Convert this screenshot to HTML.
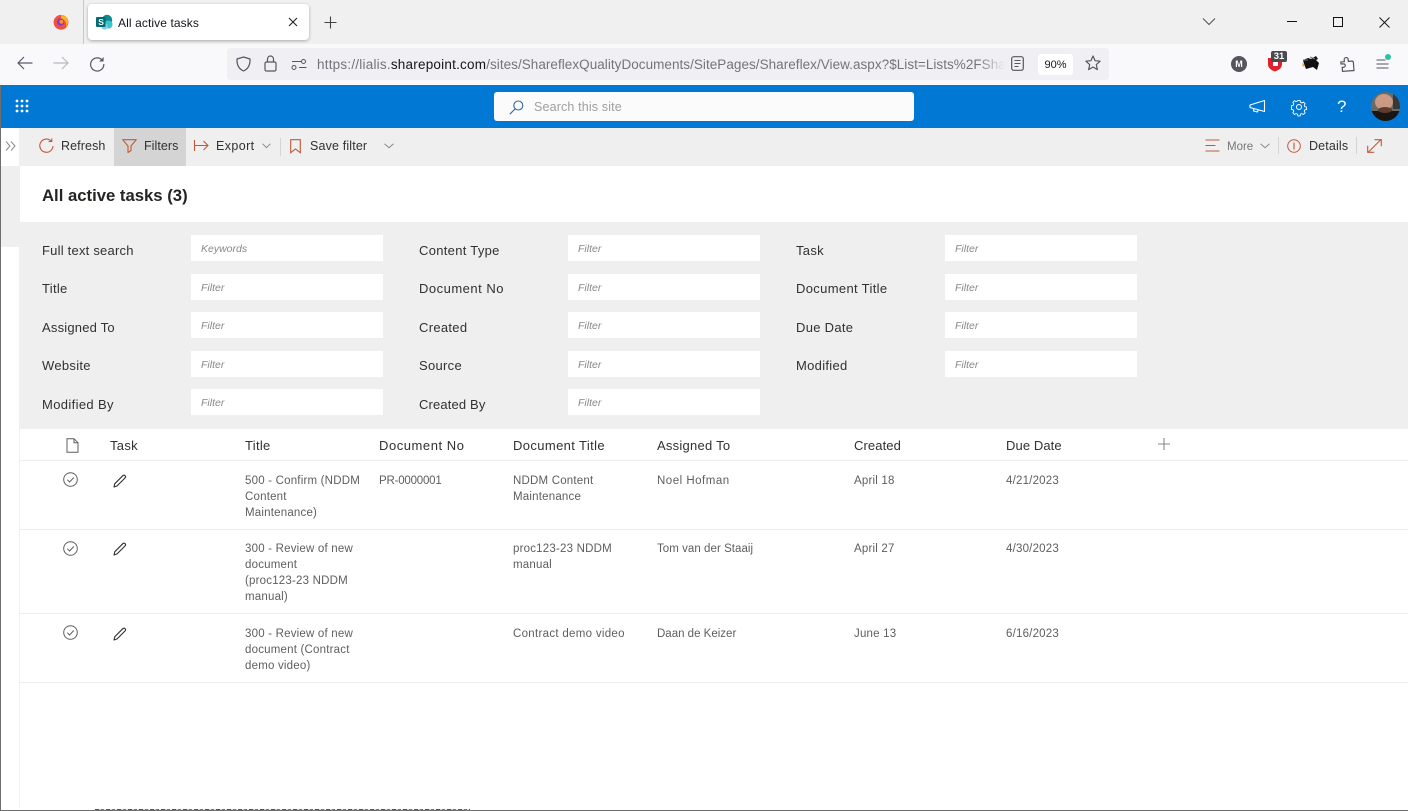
<!DOCTYPE html>
<html><head><meta charset="utf-8"><title>All active tasks</title>
<style>
html,body{margin:0;padding:0;background:#fff}
body{width:1408px;height:811px;position:relative;overflow:hidden;font-family:"Liberation Sans",sans-serif;color:#323130}
.a{position:absolute}
.t{position:absolute;white-space:nowrap;line-height:16px}
.lb{font-size:13px;color:#323130;letter-spacing:.3px}
.in{position:absolute;width:192px;height:26px;background:#fff;font-size:10.5px;font-style:italic;color:#8a8886;line-height:29px;text-indent:10px}
.h{font-size:13px;color:#323130;letter-spacing:.3px}
.c{font-size:11.5px;color:#605e5c;line-height:16px;letter-spacing:.2px}
.line{position:absolute;left:20px;width:1388px;height:1px;background:#ececec}
svg{position:absolute;overflow:visible}
</style></head><body>

<!-- browser chrome -->
<div class="a" style="left:0;top:0;width:1408px;height:44px;background:#f0f0f0"></div>
<div class="a" style="left:83px;top:0;width:1px;height:44px;background:#c8c8c8"></div>
<div class="a" style="left:88px;top:4px;width:221px;height:36px;background:#fff;border-radius:4px;box-shadow:0 1px 3px rgba(0,0,0,.3)"></div>
<svg style="left:53px;top:14px" width="16" height="16" viewBox="0 0 16 16"><circle cx="8" cy="8.3" r="7.4" fill="#f0503f"/><path d="M8 1a7 7 0 0 1 7 7c0 2-1 4-2 5 1-4-1-8-5-8z" fill="#ffb01f"/><circle cx="7.6" cy="8" r="3.6" fill="#7b3bd0"/><circle cx="8.4" cy="7.8" r="2" fill="#ff8a3c"/></svg>
<svg style="left:96px;top:14px" width="17" height="16" viewBox="0 0 17 16"><circle cx="11" cy="6" r="5.2" fill="#0f8b8d"/><circle cx="12.5" cy="10.5" r="4" fill="#37c6d0"/><circle cx="8.5" cy="12.5" r="3.2" fill="#7fd5da"/><rect x="0" y="3" width="9.5" height="10" rx="1" fill="#036c70"/><text x="2.2" y="11" font-size="8.5" font-weight="bold" fill="#fff" font-family="Liberation Sans">S</text></svg>
<div class="t" style="left:118px;top:15px;font-size:12px;color:#15141a;letter-spacing:.1px">All active tasks</div>
<svg style="left:288px;top:17px" width="10" height="10" viewBox="0 0 10 10"><path d="M1 1l8 8M9 1l-8 8" stroke="#222" stroke-width="1.1" fill="none"/></svg>
<svg style="left:324px;top:16px" width="13" height="13" viewBox="0 0 13 13"><path d="M6.5 .5v12M.5 6.5h12" stroke="#444" stroke-width="1.1" fill="none"/></svg>
<svg style="left:1202px;top:17px" width="14" height="9" viewBox="0 0 14 9"><path d="M1 1.5l6 6 6-6" stroke="#555" stroke-width="1.1" fill="none"/></svg>
<div class="a" style="left:1287px;top:21px;width:10px;height:1px;background:#111"></div>
<div class="a" style="left:1333px;top:17px;width:8px;height:8px;border:1px solid #111"></div>
<svg style="left:1379px;top:17px" width="11" height="11" viewBox="0 0 11 11"><path d="M.5.5l10 10M10.5.5l-10 10" stroke="#111" stroke-width=".9" fill="none"/></svg>

<!-- nav bar -->
<div class="a" style="left:0;top:44px;width:1408px;height:41px;background:#f9f9fb"></div>
<div class="a" style="left:227px;top:48px;width:882px;height:32px;background:#f0f0f4;border-radius:4px"></div>
<svg style="left:17px;top:56px" width="16" height="14" viewBox="0 0 16 14"><path d="M7 1L1 7l6 6M1 7h14.5" stroke="#5b5b66" stroke-width="1.2" fill="none"/></svg>
<svg style="left:53px;top:56px" width="16" height="14" viewBox="0 0 16 14"><path d="M9 1l6 6-6 6M15 7H.5" stroke="#b9b9bf" stroke-width="1.2" fill="none"/></svg>
<svg style="left:89px;top:56px" width="16" height="16" viewBox="0 0 16 16"><path d="M13.5 4.5A6.6 6.6 0 1 0 14.8 8" stroke="#5b5b66" stroke-width="1.2" fill="none"/><path d="M14.6 1v4.5h-4.500z" fill="#5b5b66"/></svg>
<svg style="left:236px;top:56px" width="15" height="16" viewBox="0 0 15 16"><path d="M7.5 1L14 3c.3 6-2 10-6.5 12C3 13 .7 9 1 3z" stroke="#55555f" stroke-width="1.2" fill="none"/></svg>
<svg style="left:264px;top:55px" width="13" height="17" viewBox="0 0 13 17"><rect x="1" y="7" width="11" height="9" rx="1.5" stroke="#55555f" stroke-width="1.2" fill="none"/><path d="M3.5 7V4a3 3 0 0 1 6 0v3" stroke="#55555f" stroke-width="1.2" fill="none"/></svg>
<svg style="left:291px;top:59px" width="16" height="11" viewBox="0 0 16 11"><path d="M1 2.500h9M8 8.500h7.500" stroke="#55555f" stroke-width="1.100" fill="none"/><circle cx="12.500" cy="2.500" r="2" stroke="#55555f" fill="none"/><circle cx="3" cy="8.500" r="2" stroke="#55555f" fill="none"/></svg>
<div class="t" style="left:317px;top:57px;width:688px;overflow:hidden;font-size:13.5px;color:#73737c;letter-spacing:.22px;-webkit-mask-image:linear-gradient(90deg,#000 96%,transparent);mask-image:linear-gradient(90deg,#000 96%,transparent)">https://lialis.<span style="color:#15141a">sharepoint.com</span><span style="letter-spacing:.04px">/sites/ShareflexQualityDocuments/SitePages/Shareflex/View.aspx?$List=Lists%2FShareflex</span></div>
<svg style="left:1011px;top:56px" width="13" height="15" viewBox="0 0 13 15"><rect x=".7" y=".7" width="11.600" height="13.600" rx="2" stroke="#55555f" stroke-width="1.200" fill="none"/><path d="M3.500 4.500h6M3.500 7.500h6M3.500 10.500h4" stroke="#55555f" fill="none"/></svg>
<div class="a" style="left:1038px;top:54px;width:35px;height:21px;background:#fff;border-radius:3px;font-size:11px;line-height:22px;text-align:center;color:#15141a">90%</div>
<svg style="left:1085px;top:55px" width="16" height="16" viewBox="0 0 16 16"><path d="M8 1l2.100 4.700 5 .5-3.800 3.400 1.100 5L8 12l-4.400 2.600 1.100-5L.9 6.200l5-.5z" stroke="#55555f" stroke-width="1.200" fill="none" stroke-linejoin="round"/></svg>
<div class="a" style="left:1231px;top:56px;width:16px;height:16px;border-radius:50%;background:#55555f;color:#fff;font-size:9px;font-weight:bold;line-height:16px;text-align:center">M</div>
<svg style="left:1268px;top:56px" width="16" height="16" viewBox="0 0 16 16"><path d="M0 2h14v6c0 4-3 6-7 7.500C3 14 0 12 0 8z" fill="#e0202a"/><rect x="5" y="6" width="5" height="4" fill="#fff"/></svg>
<div class="a" style="left:1271px;top:51px;width:16px;height:11px;background:#4a4a4f;border-radius:2px;color:#fff;font-size:9.500px;font-weight:bold;line-height:11px;text-align:center">31</div>
<svg style="left:1302px;top:55px" width="18" height="17" viewBox="0 0 18 17"><path d="M1 5l5-2 3 1 5-3 2 3-2 1 3 3-2 7-4-3-7 2-2-5z" fill="#111"/><path d="M1 5h5M8 2l5 2" stroke="#777" fill="none"/><path d="M0 8l3 2-2 2z" fill="#e8a33a"/></svg>
<svg style="left:1340px;top:56px" width="15" height="16" viewBox="0 0 15 16"><path d="M1 5.500h3.500V3.500a2 2 0 0 1 4 0v2H12c1 0 1.500.5 1.500 1.500v8H2V11h1.500a1.700 1.700 0 0 0 0-3.400H1z" stroke="#55555f" stroke-width="1.200" fill="none" transform="rotate(-4 7 8)"/></svg>
<svg style="left:1376px;top:58px" width="13" height="12" viewBox="0 0 13 12"><path d="M.5 2h9M.5 6h12M.5 10h12" stroke="#55555f" stroke-width="1.100" fill="none"/></svg>
<div class="a" style="left:1385px;top:54px;width:6px;height:6px;border-radius:50%;background:#2ac3a2"></div>

<!-- suite bar -->
<div class="a" style="left:0;top:85px;width:1408px;height:43px;background:#0078d4"></div>
<svg style="left:15px;top:99px" width="15" height="14" viewBox="0 0 15 14"><g fill="#fff"><circle cx="2" cy="2" r="1.400"/><circle cx="7" cy="2" r="1.400"/><circle cx="12" cy="2" r="1.400"/><circle cx="2" cy="7" r="1.400"/><circle cx="7" cy="7" r="1.400"/><circle cx="12" cy="7" r="1.400"/><circle cx="2" cy="12" r="1.400"/><circle cx="7" cy="12" r="1.400"/><circle cx="12" cy="12" r="1.400"/></g></svg>
<div class="a" style="left:494px;top:92px;width:420px;height:29px;background:#fbfbfb;border-radius:3px"></div>
<svg style="left:509px;top:100px" width="15" height="15" viewBox="0 0 15 15"><circle cx="9.300" cy="5.500" r="4.500" stroke="#2b6ca3" stroke-width="1.100" fill="none"/><path d="M6 9L.8 14.200" stroke="#2b6ca3" stroke-width="1.100"/></svg>
<div class="t" style="left:534px;top:99px;font-size:12.500px;color:#a19f9d;letter-spacing:.15px">Search this site</div>
<svg style="left:1249px;top:99px" width="17" height="15" viewBox="0 0 17 15"><path d="M15.500 1.500v11L1 8.500V6zM5 9.500l-.5 2.500 4 1 .8-2.400" stroke="#fff" stroke-width="1.100" fill="none" stroke-linejoin="round"/></svg>
<svg style="left:1291px;top:99px" width="16" height="16" viewBox="0 0 16 16"><circle cx="8" cy="8" r="2.500" stroke="#fff" fill="none"/><path d="M6.700.8h2.600l.4 2 1.500.7 1.800-1 1.800 1.900-1 1.700.6 1.500 2 .5v2.600l-2 .5-.6 1.500 1 1.700-1.800 1.900-1.800-1-1.500.6-.4 2H6.700l-.4-2-1.500-.6-1.800 1-1.800-1.900 1-1.700-.6-1.500-2-.5V6.600l2-.5.6-1.500-1-1.700 1.800-1.900 1.800 1 1.500-.7z" stroke="#fff" stroke-width="1" fill="none" transform="translate(.8 .8) scale(.9)"/></svg>
<div class="t" style="left:1337px;top:98px;font-size:17px;line-height:18px;color:#fff">?</div>
<svg style="left:1371px;top:92px" width="29" height="29" viewBox="0 0 29 29"><defs><clipPath id="av"><circle cx="14.500" cy="14.500" r="14.500"/></clipPath></defs><g clip-path="url(#av)"><rect width="29" height="29" fill="#6d6a66"/><ellipse cx="13" cy="10" rx="9" ry="8" fill="#c99b84"/><rect y="19" width="29" height="10" fill="#191512"/><ellipse cx="14" cy="18" rx="7" ry="3" fill="#5e3c2e"/><rect x="22" width="7" height="17" fill="#3a3836"/></g></svg>

<!-- left strip -->
<div class="a" style="left:0;top:85px;width:1px;height:726px;background:#6e6e6e"></div>
<div class="a" style="left:1px;top:128px;width:19px;height:119px;background:#efefef"></div>
<div class="a" style="left:1px;top:128px;width:18px;height:38px;background:#fff"></div>
<svg style="left:5px;top:141px" width="11" height="10" viewBox="0 0 11 10"><path d="M1 .5L5 5 1 9.500M6 .5L10 5 6 9.500" stroke="#8a8886" stroke-width="1" fill="none"/></svg>
<div class="a" style="left:19px;top:247px;width:1px;height:561px;background:#efefef"></div>
<div class="a" style="left:95px;top:809px;width:375px;height:1px;background:repeating-linear-gradient(90deg,#555 0 4px,#ccc 4px 6px,#777 6px 9px,#e4e4e4 9px 11px)"></div>
<div class="a" style="left:0;top:810px;width:1408px;height:1px;background:#6e6e6e"></div>

<!-- command bar -->
<div class="a" style="left:20px;top:128px;width:1388px;height:38px;background:#efefef"></div>
<div class="a" style="left:114px;top:128px;width:72px;height:38px;background:#d4d4d4"></div>
<svg style="left:39px;top:138px" width="15" height="15" viewBox="0 0 15 15"><path d="M12.500 3.500A6.600 6.600 0 1 0 14 8" stroke="#c0593a" stroke-width="1.100" fill="none"/><path d="M9.500 3.500h3.300V.5" stroke="#c0593a" stroke-width="1.100" fill="none"/></svg>
<div class="t" style="left:61px;top:138px;font-size:12.500px;color:#323130;letter-spacing:.1px">Refresh</div>
<svg style="left:122px;top:139px" width="15" height="14" viewBox="0 0 15 14"><path d="M.7.700h13.600L9 7v4.500l-3 2V7z" stroke="#c0593a" stroke-width="1.100" fill="none" stroke-linejoin="round"/></svg>
<div class="t" style="left:144px;top:138px;font-size:12.500px;color:#323130;letter-spacing:.05px">Filters</div>
<svg style="left:194px;top:140px" width="15" height="11" viewBox="0 0 15 11"><path d="M.5 0v11M1 5.500h13M9.500 1l4.500 4.500-4.500 4.500" stroke="#c0593a" stroke-width="1.100" fill="none"/></svg>
<div class="t" style="left:216px;top:138px;font-size:12.500px;color:#323130;letter-spacing:.4px">Export</div>
<svg style="left:262px;top:143px" width="9" height="6" viewBox="0 0 9 6"><path d="M.5.700L4.500 4.700 8.500.700" stroke="#8a8886" fill="none"/></svg>
<div class="a" style="left:280px;top:138px;width:1px;height:18px;background:#d4d4d4"></div>
<svg style="left:290px;top:139px" width="11" height="15" viewBox="0 0 11 15"><path d="M.7.700h9.600v13L5.500 10 .7 13.700z" stroke="#c0593a" stroke-width="1.100" fill="none"/></svg>
<div class="t" style="left:310px;top:138px;font-size:12.500px;color:#323130;letter-spacing:.15px">Save filter</div>
<svg style="left:384px;top:143px" width="10" height="6" viewBox="0 0 10 6"><path d="M.5.700L5 4.700 9.500.700" stroke="#8a8886" fill="none"/></svg>
<svg style="left:1205px;top:139px" width="15" height="13" viewBox="0 0 15 13"><path d="M.500 1h14M.500 6.500h10M.500 12h14" stroke="#c0593a" stroke-width="1.100" fill="none"/></svg>
<div class="t" style="left:1227px;top:139px;font-size:11.500px;color:#797775">More</div>
<svg style="left:1260px;top:143px" width="10" height="6" viewBox="0 0 10 6"><path d="M.5.700L5 4.700 9.500.700" stroke="#8a8886" fill="none"/></svg>
<div class="a" style="left:1278px;top:137px;width:1px;height:17px;background:#d4d4d4"></div>
<svg style="left:1287px;top:139px" width="14" height="14" viewBox="0 0 14 14"><circle cx="7" cy="7" r="6.300" stroke="#c0593a" stroke-width="1" fill="none"/><path d="M7 3.500v7" stroke="#c0593a" stroke-width="1.100"/></svg>
<div class="t" style="left:1309px;top:138px;font-size:12.500px;color:#323130;letter-spacing:.15px">Details</div>
<div class="a" style="left:1356px;top:137px;width:1px;height:17px;background:#d4d4d4"></div>
<svg style="left:1367px;top:139px" width="15" height="14" viewBox="0 0 15 14"><path d="M1 13.500L14 .5M7.500 .7h6.800v6.500M.7 6.800v6.500h6.500" stroke="#c0593a" stroke-width="1.100" fill="none"/></svg>

<!-- title -->
<div class="t" style="left:42px;top:187px;font-size:16.700px;line-height:18px;font-weight:bold;color:#252423">All active tasks (3)</div>

<!-- filters -->
<div class="a" style="left:20px;top:222px;width:1388px;height:207px;background:#efefef"></div>

<div class="t lb" style="left:42px;top:243px;letter-spacing:.22px">Full text search</div>
<div class="in" style="left:191px;top:235px">Keywords</div>
<div class="t lb" style="left:419px;top:243px">Content Type</div>
<div class="in" style="left:568px;top:235px">Filter</div>
<div class="t lb" style="left:796px;top:243px">Task</div>
<div class="in" style="left:945px;top:235px">Filter</div>

<div class="t lb" style="left:42px;top:281px">Title</div>
<div class="in" style="left:191px;top:274px">Filter</div>
<div class="t lb" style="left:419px;top:281px;letter-spacing:.5px">Document No</div>
<div class="in" style="left:568px;top:274px">Filter</div>
<div class="t lb" style="left:796px;top:281px;letter-spacing:.34px">Document Title</div>
<div class="in" style="left:945px;top:274px">Filter</div>

<div class="t lb" style="left:42px;top:320px;letter-spacing:.2px">Assigned To</div>
<div class="in" style="left:191px;top:312px">Filter</div>
<div class="t lb" style="left:419px;top:320px">Created</div>
<div class="in" style="left:568px;top:312px">Filter</div>
<div class="t lb" style="left:796px;top:320px">Due Date</div>
<div class="in" style="left:945px;top:312px">Filter</div>

<div class="t lb" style="left:42px;top:358px">Website</div>
<div class="in" style="left:191px;top:351px">Filter</div>
<div class="t lb" style="left:419px;top:358px">Source</div>
<div class="in" style="left:568px;top:351px">Filter</div>
<div class="t lb" style="left:796px;top:358px">Modified</div>
<div class="in" style="left:945px;top:351px">Filter</div>

<div class="t lb" style="left:42px;top:397px;letter-spacing:.36px">Modified By</div>
<div class="in" style="left:191px;top:389px">Filter</div>
<div class="t lb" style="left:419px;top:397px;letter-spacing:.15px">Created By</div>
<div class="in" style="left:568px;top:389px">Filter</div>

<!-- table header -->
<svg style="left:66px;top:438px" width="13" height="15" viewBox="0 0 13 15"><path d="M1 .700h7l4 4v9.600H1zM8 .700v4h4" stroke="#605e5c" stroke-width="1" fill="none"/></svg>
<div class="t h" style="left:110px;top:438px">Task</div>
<div class="t h" style="left:245px;top:438px">Title</div>
<div class="t h" style="left:379px;top:438px;letter-spacing:.55px">Document No</div>
<div class="t h" style="left:513px;top:438px;letter-spacing:.38px">Document Title</div>
<div class="t h" style="left:657px;top:438px;letter-spacing:.25px">Assigned To</div>
<div class="t h" style="left:854px;top:438px;letter-spacing:.1px">Created</div>
<div class="t h" style="left:1006px;top:438px;letter-spacing:.1px">Due Date</div>
<svg style="left:1158px;top:438px" width="12" height="12" viewBox="0 0 12 12"><path d="M6 0v12M0 6h12" stroke="#8a8886" stroke-width="1.100" fill="none"/></svg>
<div class="line" style="top:460px"></div>

<!-- rows -->
<svg style="left:63px;top:472px" width="15" height="15" viewBox="0 0 15 15"><circle cx="7.500" cy="7.500" r="6.800" stroke="#605e5c" fill="none"/><path d="M4.300 7.700l2.300 2.300 4.200-4.500" stroke="#605e5c" fill="none"/></svg>
<svg style="left:113px;top:474px" width="14" height="14" viewBox="0 0 14 14"><path d="M1 13l.8-3.300 8-8c.7-.7 1.700-.7 2.300 0s.6 1.600 0 2.200l-8 8z" stroke="#323130" stroke-width="1.100" fill="none" stroke-linejoin="round"/></svg>
<div class="a c" style="left:245px;top:473px;width:125px">500 - Confirm (NDDM<br>Content<br>Maintenance)</div>
<div class="t c" style="left:379px;top:473px;letter-spacing:-.2px">PR-0000001</div>
<div class="a c" style="left:513px;top:473px;width:125px">NDDM Content<br>Maintenance</div>
<div class="t c" style="left:657px;top:473px;letter-spacing:.5px">Noel Hofman</div>
<div class="t c" style="left:854px;top:473px">April 18</div>
<div class="t c" style="left:1006px;top:473px">4/21/2023</div>
<div class="line" style="top:529px"></div>

<svg style="left:63px;top:541px" width="15" height="15" viewBox="0 0 15 15"><circle cx="7.500" cy="7.500" r="6.800" stroke="#605e5c" fill="none"/><path d="M4.300 7.700l2.300 2.300 4.200-4.500" stroke="#605e5c" fill="none"/></svg>
<svg style="left:113px;top:542px" width="14" height="14" viewBox="0 0 14 14"><path d="M1 13l.8-3.300 8-8c.7-.7 1.700-.7 2.300 0s.6 1.600 0 2.200l-8 8z" stroke="#323130" stroke-width="1.100" fill="none" stroke-linejoin="round"/></svg>
<div class="a c" style="left:245px;top:541px;width:125px">300 - Review of new<br>document<br>(proc123-23 NDDM<br>manual)</div>
<div class="a c" style="left:513px;top:541px;width:125px">proc123-23 NDDM<br>manual</div>
<div class="t c" style="left:657px;top:541px;letter-spacing:.05px">Tom van der Staaij</div>
<div class="t c" style="left:854px;top:541px">April 27</div>
<div class="t c" style="left:1006px;top:541px">4/30/2023</div>
<div class="line" style="top:613px"></div>

<svg style="left:63px;top:625px" width="15" height="15" viewBox="0 0 15 15"><circle cx="7.500" cy="7.500" r="6.800" stroke="#605e5c" fill="none"/><path d="M4.300 7.700l2.300 2.300 4.200-4.500" stroke="#605e5c" fill="none"/></svg>
<svg style="left:113px;top:627px" width="14" height="14" viewBox="0 0 14 14"><path d="M1 13l.8-3.300 8-8c.7-.7 1.700-.7 2.300 0s.6 1.600 0 2.200l-8 8z" stroke="#323130" stroke-width="1.100" fill="none" stroke-linejoin="round"/></svg>
<div class="a c" style="left:245px;top:626px;width:125px">300 - Review of new<br>document (Contract<br>demo video)</div>
<div class="t c" style="left:513px;top:626px;letter-spacing:.3px">Contract demo video</div>
<div class="t c" style="left:657px;top:626px;letter-spacing:0">Daan de Keizer</div>
<div class="t c" style="left:854px;top:626px">June 13</div>
<div class="t c" style="left:1006px;top:626px">6/16/2023</div>
<div class="line" style="top:682px"></div>

</body></html>
